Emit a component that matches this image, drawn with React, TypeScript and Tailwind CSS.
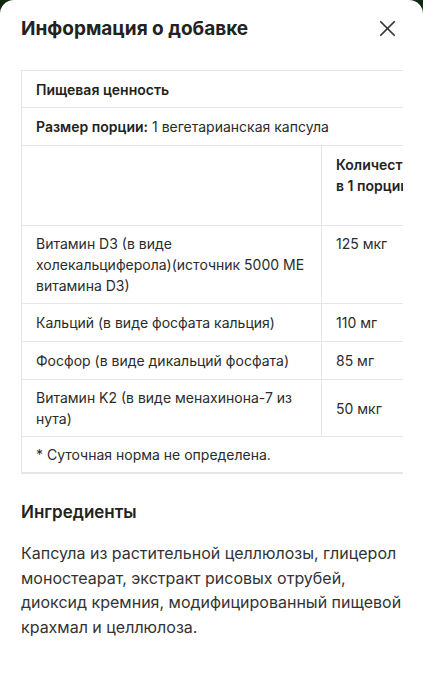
import { X } from 'lucide-react';

const rows = [
  { name: 'Витамин D3 (в виде холекальциферола)(источник 5000 МЕ витамина D3)', amount: '125 мкг', align: 'align-top', pad: 'py-[7px]' },
  { name: 'Кальций (в виде фосфата кальция)', amount: '110 мг', align: 'align-middle', pad: 'py-[8px]' },
  { name: 'Фосфор (в виде дикальций фосфата)', amount: '85 мг', align: 'align-middle', pad: 'py-[8px]' },
  { name: 'Витамин K2 (в виде менахинона-7 из нута)', amount: '50 мкг', align: 'align-middle', pad: 'py-[7px]' },
];

export default function App() {
  return (
    <div className="bg-[#10280f] min-h-[699px]" style={{ fontFamily: 'Inter, "Noto Sans", sans-serif' }}>
      <div className="bg-white rounded-t-[14px] min-h-[699px] text-[#2b2b2b]">
        <div className="flex items-center justify-between pl-[21px] pr-[22px] pt-[15px] pb-[28px]">
          <h1 className="text-[19px] font-bold leading-[26px] text-[#222]">Информация о добавке</h1>
          <X className="w-[27px] h-[27px] text-[#333]" strokeWidth={1.5} />
        </div>

        <div className="ml-[21px] mr-[20px] overflow-hidden">
          <table className="table-fixed border-collapse w-[560px] text-[14px] leading-[21px]">
            <colgroup>
              <col className="w-[300px]" />
              <col className="w-[110px]" />
              <col className="w-[150px]" />
            </colgroup>
            <tbody>
              <tr className="border-t border-[#e6e6e6]">
                <td colSpan={3} className="border-l border-[#e6e6e6] px-[14px] py-[7.5px] font-semibold text-[#222]">
                  Пищевая ценность
                </td>
              </tr>
              <tr className="border-t border-[#e6e6e6]">
                <td colSpan={3} className="border-l border-[#e6e6e6] px-[14px] py-[8px]">
                  <span className="font-semibold text-[#222]">Размер порции:</span> 1 вегетарианская капсула
                </td>
              </tr>
              <tr className="border-t border-[#e6e6e6]">
                <td className="border-l border-r border-[#e6e6e6] px-[14px] py-[8px] h-[80px]"></td>
                <td className="border-r border-[#e6e6e6] px-[14px] py-[8px] align-top font-semibold text-[#222]">
                  Количество в 1 порции
                </td>
                <td className="px-[14px] py-[8px] align-top font-semibold text-[#222]">
                  % от суточной нормы
                </td>
              </tr>
              {rows.map((r) => (
                <tr key={r.name} className="border-t border-[#e6e6e6]">
                  <td className={`border-l border-r border-[#e6e6e6] px-[14px] ${r.pad} align-top`}>{r.name}</td>
                  <td className={`border-r border-[#e6e6e6] px-[14px] ${r.pad} ${r.align}`}>{r.amount}</td>
                  <td className={`px-[14px] ${r.pad} ${r.align}`}>*</td>
                </tr>
              ))}
              <tr className="border-t border-b-2 border-[#e6e6e6]">
                <td colSpan={3} className="border-l border-[#e6e6e6] px-[14px] py-[7px]">
                  * Суточная норма не определена.
                </td>
              </tr>
            </tbody>
          </table>
        </div>

        <div className="px-[21px] pt-[26px]">
          <h2 className="text-[17px] font-semibold leading-[24px] text-[#222]">Ингредиенты</h2>
          <p className="mt-[17px] text-[16px] leading-[24.5px] text-[#333]">
            Капсула из растительной целлюлозы, глицерол моностеарат, экстракт рисовых отрубей, диоксид кремния, модифицированный пищевой крахмал и целлюлоза.
          </p>
        </div>
      </div>
    </div>
  );
}
